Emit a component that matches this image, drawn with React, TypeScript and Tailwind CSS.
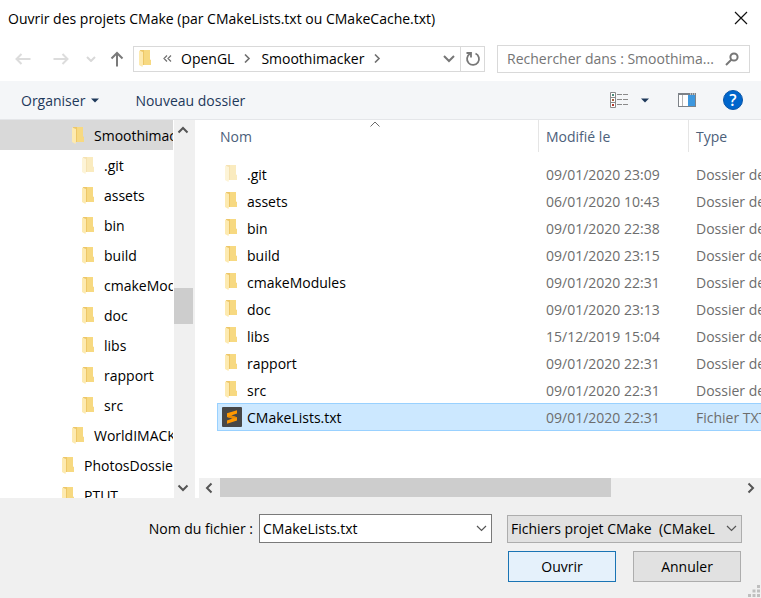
import type { ReactNode } from "react";

type TreeNode = { name: string; indent: string; faded?: boolean; selected?: boolean };
type Entry = { name: string; date: string; type: string; faded?: boolean; file?: boolean };

const tree: TreeNode[] = [
  { name: "Smoothimacker", indent: "pl-[72px]", selected: true },
  { name: ".git", indent: "pl-[82px]", faded: true },
  { name: "assets", indent: "pl-[82px]" },
  { name: "bin", indent: "pl-[82px]" },
  { name: "build", indent: "pl-[82px]" },
  { name: "cmakeModules", indent: "pl-[82px]" },
  { name: "doc", indent: "pl-[82px]" },
  { name: "libs", indent: "pl-[82px]" },
  { name: "rapport", indent: "pl-[82px]" },
  { name: "src", indent: "pl-[82px]" },
  { name: "WorldIMACKER", indent: "pl-[72px]" },
  { name: "PhotosDossier", indent: "pl-[62px]" },
  { name: "PTUT", indent: "pl-[62px]" },
];

const entries: Entry[] = [
  { name: ".git", date: "09/01/2020 23:09", type: "Dossier de fichiers", faded: true },
  { name: "assets", date: "06/01/2020 10:43", type: "Dossier de fichiers" },
  { name: "bin", date: "09/01/2020 22:38", type: "Dossier de fichiers" },
  { name: "build", date: "09/01/2020 23:15", type: "Dossier de fichiers" },
  { name: "cmakeModules", date: "09/01/2020 22:31", type: "Dossier de fichiers" },
  { name: "doc", date: "09/01/2020 23:13", type: "Dossier de fichiers" },
  { name: "libs", date: "15/12/2019 15:04", type: "Dossier de fichiers" },
  { name: "rapport", date: "09/01/2020 22:31", type: "Dossier de fichiers" },
  { name: "src", date: "09/01/2020 22:31", type: "Dossier de fichiers" },
  { name: "CMakeLists.txt", date: "09/01/2020 22:31", type: "Fichier TXT", file: true },
];

function Folder({ faded = false }: { faded?: boolean }) {
  return (
    <svg width="12" height="17" viewBox="0 0 12 17" className={faded ? "shrink-0 opacity-50" : "shrink-0"} aria-hidden="true">
      <path d="M1 0H11V9.500L12 10.500V15H3Z" fill="#edc768" />
      <path d="M5 0H11V9.500L12 10.500V15H5Z" fill="#f7d981" />
      <path d="M0 .5L4 2V14.500L3.500 17L0 15Z" fill="#fdeab0" />
    </svg>
  );
}

function SublimeIcon() {
  return (
    <svg width="20" height="20" viewBox="0 0 20 20" className="shrink-0" aria-hidden="true">
      <rect width="20" height="20" rx="1" fill="#474747" />
      <path d="M15 3.200V6.600L9.300 8.500L15 10.200V13.600L5 16.800V13.400L10.500 11.600L5 9.900V6.300Z" fill="#ff9800" />
      <path d="M5 9.900L9.300 8.500L15 10.200V11L10.500 11.600Z" fill="#e58a06" />
    </svg>
  );
}

function Stroke({ w, h, d, color, width = 2 }: { w: number; h: number; d: string; color: string; width?: number }) {
  return (
    <svg width={w} height={h} viewBox={`0 0 ${w} ${h}`} fill="none" stroke={color} strokeWidth={width} className="shrink-0" aria-hidden="true">
      <path d={d} />
    </svg>
  );
}

function IconButton({ label, className = "", children }: { label: string; className?: string; children: ReactNode }) {
  return (
    <button type="button" aria-label={label} className={`flex shrink-0 items-center justify-center ${className}`}>
      {children}
    </button>
  );
}

function TitleBar() {
  return (
    <header className="flex h-9 shrink-0 items-center justify-between pl-2 pr-[13px]">
      <h1 className="whitespace-nowrap pt-px">Ouvrir des projets CMake (par CMakeLists.txt ou CMakeCache.txt)</h1>
      <IconButton label="Fermer">
        <Stroke w={14} h={14} d="M1 1L13 13M13 1L1 13" color="#111" width={1.2} />
      </IconButton>
    </header>
  );
}

function AddressRow() {
  return (
    <div className="flex h-[45px] shrink-0 items-center pl-[15px] pr-[11px]">
      <IconButton label="Précédent">
        <Stroke w={16} h={12} d="M6.500 1L1.500 6L6.500 11M1.500 6H15.500" color="#dcdcdc" />
      </IconButton>
      <IconButton label="Suivant" className="ml-[22px]">
        <Stroke w={16} h={12} d="M9.500 1L14.500 6L9.500 11M14.500 6H.5" color="#dcdcdc" />
      </IconButton>
      <IconButton label="Emplacements récents" className="ml-[17px]">
        <Stroke w={10} h={6} d="M1 1L5 5L9 1" color="#d8d8d8" />
      </IconButton>
      <IconButton label="Dossier parent" className="ml-[14px]">
        <Stroke w={14} h={16} d="M7 15.500V2M1.500 7.500L7 2L12.500 7.500" color="#7a7a7a" />
      </IconButton>
      <div className="ml-[9px] flex h-[26px] min-w-0 flex-1 border border-[#d9d9d9]">
        <nav aria-label="Chemin" className="flex min-w-0 flex-1 items-center overflow-hidden pl-[5px]">
          <Folder />
          <span className="ml-3 mr-[9px]">
            <Stroke w={9} h={7} d="M4 .5L1 3.500L4 6.500M8 .5L5 3.500L8 6.500" color="#707070" width={1.2} />
          </span>
          <button type="button">OpenGL</button>
          <span className="mx-[10px]">
            <Stroke w={7} h={9} d="M1 .5L5 4.500L1 8.500" color="#707070" width={1.6} />
          </span>
          <button type="button">Smoothimacker</button>
          <span className="ml-[10px]">
            <Stroke w={7} h={9} d="M1 .5L5 4.500L1 8.500" color="#707070" width={1.6} />
          </span>
        </nav>
        <IconButton label="Historique" className="w-[22px]">
          <Stroke w={12} h={8} d="M1 1L6 6L11 1" color="#777" />
        </IconButton>
        <IconButton label="Actualiser" className="w-6 border-l border-[#d9d9d9]">
          <Stroke w={16} h={16} d="M10.500 2.500A6 6 0 1 1 5 2.800M1.500 2H6V6.500" color="#777" width={1.8} />
        </IconButton>
      </div>
      <div className="ml-3 flex h-7 w-[253px] items-center border border-[#d9d9d9] pl-[9px] pr-[10px]">
        <input
          type="text"
          aria-label="Rechercher"
          placeholder="Rechercher dans : Smoothima..."
          className="min-w-0 flex-1 bg-transparent outline-none placeholder:text-[#757575]"
        />
        <svg width="14" height="14" viewBox="0 0 14 14" fill="none" stroke="#777" strokeWidth="2" className="shrink-0" aria-hidden="true">
          <circle cx="9" cy="5" r="3.600" />
          <path d="M6.500 7.500L1 13" />
        </svg>
      </div>
    </div>
  );
}

function Caret() {
  return (
    <svg width="8" height="5" viewBox="0 0 8 5" fill="#1e395b" className="shrink-0" aria-hidden="true">
      <path d="M0 .5H8L4 4.500Z" />
    </svg>
  );
}

function Toolbar() {
  return (
    <div className="flex h-[39px] shrink-0 items-center border-b border-[#e4e6e9] bg-[#f4f6f8] pl-[21px] pr-[18px] text-[#1e395b]">
      <button type="button" className="flex items-center gap-[6px] pt-px">
        Organiser <Caret />
      </button>
      <button type="button" className="ml-9 pt-px">
        Nouveau dossier
      </button>
      <IconButton label="Affichage" className="ml-auto">
        <svg width="18" height="16" viewBox="0 0 18 16" aria-hidden="true">
          <path d="M.5 .5H5.500V15.500H.5ZM.5 5.500H5.500M.5 10.500H5.500" fill="#fff" stroke="#8a8a8a" />
          <path d="M2 2h2v2H2z" fill="#4a8a7a" />
          <path d="M2 7h2v2H2z" fill="#a5603c" />
          <path d="M2 12h2v2H2z" fill="#b3392c" />
          <path d="M7 2.500h5M13 2.500h5M7 7.500h5M13 7.500h5M7 12.500h5M13 12.500h5" stroke="#8a8a8a" />
        </svg>
      </IconButton>
      <IconButton label="Autres options" className="ml-[13px]">
        <Caret />
      </IconButton>
      <IconButton label="Volet de visualisation" className="ml-[29px]">
        <svg width="18" height="14" viewBox="0 0 18 14" aria-hidden="true">
          <rect x=".5" y=".5" width="17" height="13" fill="#fff" stroke="#7d8288" />
          <path d="M0 0H18V2H0Z" fill="#7d8288" />
          <path d="M4.500 2V13" stroke="#b5b5b5" />
          <rect x="10" y="2" width="7" height="11" fill="#3d97de" />
          <path d="M12 1h1M14 1h1M16 1h1" stroke="#fff" />
        </svg>
      </IconButton>
      <IconButton label="Aide" className="ml-[27px] size-5 rounded-full border border-[#0a56a8] bg-[#0066cc] text-base font-semibold text-white">
        ?
      </IconButton>
    </div>
  );
}

function Sidebar() {
  return (
    <aside className="flex w-[195px] shrink-0 overflow-hidden border-r border-[#f0f0f0]">
      <ul className="w-[173px] overflow-hidden">
        {tree.map((node) => (
          <li key={node.name}>
            <button
              type="button"
              className={`flex h-[30px] w-full items-center gap-[10px] whitespace-nowrap ${node.indent} ${node.selected ? "bg-[#d9d9d9]" : ""}`}
            >
              <Folder faded={node.faded} />
              <span className="pt-0.5">{node.name}</span>
            </button>
          </li>
        ))}
      </ul>
      <div className="ml-px flex w-5 flex-col bg-[#f0f0f0]">
        <IconButton label="Défiler vers le haut" className="h-5 pr-0.5">
          <Stroke w={12} h={8} d="M1.500 6.500L6 2L10.500 6.500" color="#555" />
        </IconButton>
        <div className="flex flex-1 flex-col">
          <div className="grow-[148]" />
          <div className="mr-px h-9 bg-[#cdcdcd]" />
          <div className="grow-[154]" />
        </div>
        <IconButton label="Défiler vers le bas" className="h-5 pr-0.5">
          <Stroke w={12} h={8} d="M1.500 1.500L6 6L10.500 1.500" color="#555" />
        </IconButton>
      </div>
    </aside>
  );
}

function FileTable() {
  return (
    <table className="w-[721px] table-fixed border-separate border-spacing-0 text-left">
      <thead className="text-[#4c607a]">
        <tr className="h-8">
          <th scope="col" aria-sort="ascending" className="relative w-[321px] p-0 pl-[3px] pt-0.5 font-normal">
            <span className="absolute inset-x-0 top-px flex justify-center pr-1.5">
              <Stroke w={10} h={6} d="M.5 5.500L5 1L9.500 5.500" color="#6b6b6b" width={1} />
            </span>
            Nom
          </th>
          <th scope="col" className="w-[150px] border-l border-[#e5e5e5] p-0 pl-[7px] pt-0.5 font-normal">
            Modifié le
          </th>
          <th scope="col" className="border-l border-[#e5e5e5] p-0 pl-[7px] pt-0.5 font-normal">
            Type
          </th>
        </tr>
      </thead>
      <tbody className="text-[#6d6d6d] before:block before:h-2">
        {entries.map((entry) => (
          <tr key={entry.name} aria-selected={!!entry.file} className={entry.file ? "h-7 bg-[#cce8ff]" : "h-[27px]"}>
            <td className={entry.file ? "border border-r-0 border-[#99d1ff] p-0 pl-1" : "p-0 pl-2"}>
              <span className={`flex items-center text-black ${entry.file ? "gap-[5px]" : "gap-[10px]"}`}>
                {entry.file ? <SublimeIcon /> : <Folder faded={entry.faded} />}
                <span className="pt-0.5">{entry.name}</span>
              </span>
            </td>
            <td className={entry.file ? "border-y border-[#99d1ff] p-0 pl-2 pt-0.5" : "p-0 pl-2 pt-0.5"}>{entry.date}</td>
            <td className={entry.file ? "border-y border-[#99d1ff] p-0 pl-2 pt-0.5" : "p-0 pl-2 pt-0.5"}>{entry.type}</td>
          </tr>
        ))}
      </tbody>
    </table>
  );
}

function FilePane() {
  return (
    <section className="ml-1 flex min-w-0 flex-1 flex-col">
      <div className="min-h-0 flex-1 overflow-hidden pl-[18px]">
        <FileTable />
      </div>
      <div className="flex h-5 shrink-0 bg-[#f0f0f0]">
        <IconButton label="Défiler vers la gauche" className="w-[21px] pr-0.5">
          <Stroke w={8} h={12} d="M6.500 1.500L2 6L6.500 10.500" color="#555" />
        </IconButton>
        <div className="flex-1">
          <div className="h-[19px] w-3/4 bg-[#cdcdcd]" />
        </div>
        <IconButton label="Défiler vers la droite" className="w-5">
          <Stroke w={8} h={12} d="M1.500 1.500L6 6L1.500 10.500" color="#555" />
        </IconButton>
      </div>
    </section>
  );
}

function Footer() {
  return (
    <footer className="relative shrink-0 bg-[#f0f0f0] pb-4 pr-[19px] pt-4">
      <div className="flex items-center">
        <label htmlFor="filename" className="w-[253px] shrink-0 text-right">
          Nom du fichier :
        </label>
        <div className="ml-[6px] flex h-[29px] min-w-0 flex-1 items-center border border-[#7a7a7a] bg-white pl-[3px] pr-1">
          <input id="filename" type="text" defaultValue="CMakeLists.txt" className="min-w-0 flex-1 bg-transparent outline-none" />
          <IconButton label="Fichiers récents">
            <Stroke w={11} h={7} d="M1 1L5.500 5.500L10 1" color="#555" width={1.2} />
          </IconButton>
        </div>
        <div className="relative ml-[15px] w-[235px] shrink-0">
          <select
            aria-label="Type de fichier"
            className="block h-7 w-full appearance-none border border-[#adadad] bg-[#e1e1e1] pl-[3px] pr-5 outline-none"
          >
            <option>{"Fichiers projet CMake\u00a0 (CMakeL"}</option>
          </select>
          <span className="pointer-events-none absolute inset-y-0 right-[5px] flex items-center">
            <Stroke w={11} h={7} d="M1 1L5.500 5.500L10 1" color="#555" width={1.2} />
          </span>
        </div>
      </div>
      <div className="mt-2 flex justify-end gap-[17px] pr-px">
        <button type="button" className="h-[31px] w-[108px] border border-[#1a74b4] bg-[#e5f1fb]">
          Ouvrir
        </button>
        <button type="button" className="h-[31px] w-[108px] border border-[#adadad] bg-[#e1e1e1]">
          Annuler
        </button>
      </div>
      <svg width="12" height="12" viewBox="0 0 12 12" fill="#bfbfbf" className="absolute bottom-px right-px" aria-hidden="true">
        <path d="M9 0h3v3H9zM4.500 4.500h3v3h-3zM9 4.500h3v3H9zM0 9h3v3H0zM4.500 9h3v3h-3zM9 9h3v3H9z" />
      </svg>
    </footer>
  );
}

export default function App() {
  return (
    <main className="flex h-screen flex-col overflow-hidden bg-white font-['Open_Sans','Noto_Sans',sans-serif] text-sm text-black">
      <TitleBar />
      <AddressRow />
      <Toolbar />
      <div className="flex min-h-0 flex-1">
        <Sidebar />
        <FilePane />
      </div>
      <Footer />
    </main>
  );
}
